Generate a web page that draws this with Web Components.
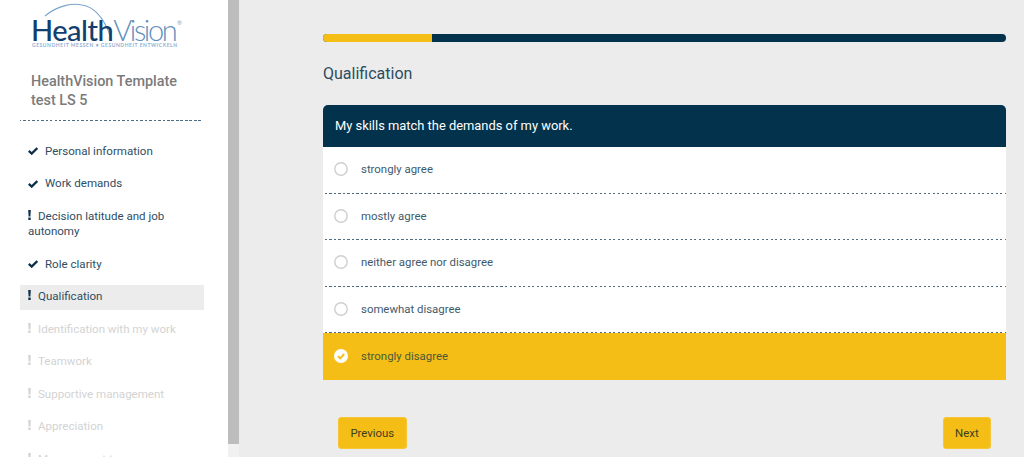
<!DOCTYPE html>
<html lang="en">
<head>
<meta charset="utf-8">
<title>HealthVision</title>
<style>
  html, body { margin: 0; height: 100%; overflow: hidden; }
  body { font-family: Roboto, "Liberation Sans", sans-serif; background: #ececec; }
</style>
</head>
<body>
<hv-app>
  <hv-sidebar slot="side" heading="HealthVision Template test LS 5">
    <hv-nav-item state="done">Personal information</hv-nav-item>
    <hv-nav-item state="done">Work demands</hv-nav-item>
    <hv-nav-item state="todo">Decision latitude and job autonomy</hv-nav-item>
    <hv-nav-item state="done">Role clarity</hv-nav-item>
    <hv-nav-item state="todo" active>Qualification</hv-nav-item>
    <hv-nav-item state="todo" disabled>Identification with my work</hv-nav-item>
    <hv-nav-item state="todo" disabled>Teamwork</hv-nav-item>
    <hv-nav-item state="todo" disabled>Supportive management</hv-nav-item>
    <hv-nav-item state="todo" disabled>Appreciation</hv-nav-item>
    <hv-nav-item state="todo" disabled>Management transparency</hv-nav-item>
  </hv-sidebar>
  <hv-progress value="16"></hv-progress>
  <hv-heading>Qualification</hv-heading>
  <hv-question text="My skills match the demands of my work.">
    <hv-option>strongly agree</hv-option>
    <hv-option>mostly agree</hv-option>
    <hv-option>neither agree nor disagree</hv-option>
    <hv-option>somewhat disagree</hv-option>
    <hv-option selected>strongly disagree</hv-option>
  </hv-question>
  <hv-actions>
    <hv-button>Previous</hv-button>
    <hv-button>Next</hv-button>
  </hv-actions>
</hv-app>
<script>
'use strict';

// small helper so every element sets up its shadow root the same way
function shadow(el, html) {
  const template = document.createElement('template');
  template.innerHTML = html;
  const root = el.attachShadow({ mode: 'open' });
  root.appendChild(template.content.cloneNode(true));
  return root;
}

customElements.define('hv-app', class extends HTMLElement {
  constructor() {
    super();
    shadow(this, `
      <style>
        :host { display: flex; height: 457px; overflow: hidden; }
        .side { flex: 0 0 228px; height: 457px; background: #fff; overflow: hidden; }
        .bar { flex: 0 0 11px; background: #f1f1f1; display: flex; }
        .bar div { flex: 1; height: 444px; background: #bdbdbd; }
        main { flex: 1; padding: 34px 18px 0 84px; min-width: 0; }
      </style>
      <div class="side"><slot name="side"></slot></div>
      <div class="bar"><div></div></div>
      <main><slot></slot></main>
    `);
  }
});

customElements.define('hv-logo', class extends HTMLElement {
  constructor() {
    super();
    shadow(this, `
      <style>
        :host { display: block; height: 50px; position: relative; }
        svg { position: absolute; left: 0; top: 0; }
        .word { position: absolute; left: 31px; top: 18px; font: 300 29px/24px Lato, sans-serif; letter-spacing: -2.4px; white-space: nowrap; color: #5f8fc0; }
        .word b { font-weight: 500; letter-spacing: -.5px; color: #123f6d; }
        .reg { position: absolute; left: 177px; top: 19px; font: 400 6px/7px Lato, sans-serif; color: #7fa3c9; }
        .tag { position: absolute; left: 32px; top: 42px; font: 700 5px/6px Lato, sans-serif; letter-spacing: .54px; white-space: nowrap; color: #8fb0d2; }
      </style>
      <svg width="228" height="50" viewBox="0 0 228 50"><path d="M45 16 C58 5 73 3 82 5 C95 7 104 19 110 35" fill="none" stroke="#7ba3cc" stroke-width="1.1"/></svg>
      <div class="word"><b>Health</b>Vision</div>
      <div class="reg">®</div>
      <div class="tag">GESUNDHEIT MESSEN • GESUNDHEIT ENTWICKELN</div>
    `);
  }
});

customElements.define('hv-sidebar', class extends HTMLElement {
  constructor() {
    super();
    const root = shadow(this, `
      <style>
        :host { display: block; padding-bottom: 20px; }
        h1 { margin: 22px 0 0; padding: 0 40px 0 31px; font: 500 14.4px/19px Roboto, sans-serif; color: #7b7b7b; height: 39px; }
        .rule { margin: 9px 26px 0 20px; height: 1px; background: repeating-linear-gradient(90deg, #4d6c82 0 1px, transparent 1px 3px, #4d6c82 3px 4.5px); }
        nav { margin: 18.5px 24px 0 20px; display: block; }
      </style>
      <hv-logo></hv-logo>
      <h1></h1>
      <div class="rule"></div>
      <nav><slot></slot></nav>
    `);
    root.querySelector('h1').textContent = this.getAttribute('heading');
  }
});

customElements.define('hv-nav-item', class extends HTMLElement {
  constructor() {
    super();
    const done = this.getAttribute('state') === 'done';
    const icon = done
      ? '<svg class="chk" width="10" height="8" viewBox="0 0 10 8"><path d="M.8 3.9 3.7 6.6 9.3 1.1" fill="none" stroke="currentColor" stroke-width="2.3"/></svg>'
      : '<svg class="exc" width="3" height="10" viewBox="0 0 3 10"><path d="M.2 0H2.8L2.4 6.4H.6ZM.3 7.6H2.7V10H.3Z" fill="currentColor"/></svg>';
    shadow(this, `
      <style>
        :host { display: block; padding: 4px 7px 5px 8px; margin-bottom: 7.6px; font: 400 11.55px/15.9px Roboto, sans-serif; color: #2f4d62; }
        :host([active]) { background: #ececec; }
        :host([disabled]) { color: #d3d3d3; }
        svg { display: inline-block; margin-right: 7px; }
        .chk { vertical-align: -0.5px; color: #0d2f47; }
        .exc { vertical-align: 0; color: #0d2f47; }
        :host([disabled]) .exc { color: #d3d3d3; }
      </style>
      ${icon}<slot></slot>
    `);
  }
});

customElements.define('hv-progress', class extends HTMLElement {
  constructor() {
    super();
    const root = shadow(this, `
      <style>
        :host { display: block; height: 8px; border-radius: 4px; background: #03324c; overflow: hidden; }
        div { height: 100%; background: #f5be17; }
      </style>
      <div></div>
    `);
    root.querySelector('div').style.width = this.getAttribute('value') + '%';
  }
});

customElements.define('hv-heading', class extends HTMLElement {
  constructor() {
    super();
    shadow(this, `
      <style>
        :host { display: block; margin: 22px 0 21px; font: 400 16px/20px Roboto, sans-serif; color: #2c4c61; }
      </style>
      <slot></slot>
    `);
  }
});

customElements.define('hv-question', class extends HTMLElement {
  constructor() {
    super();
    const root = shadow(this, `
      <style>
        :host { display: block; }
        header { height: 42px; box-sizing: border-box; padding: 0 12px; display: flex; align-items: center; background: #03324c; color: #fff; font: 400 12.9px/16px Roboto, sans-serif; border-radius: 5px 5px 0 0; }
      </style>
      <header></header>
      <slot></slot>
    `);
    root.querySelector('header').textContent = this.getAttribute('text');
  }
});

customElements.define('hv-option', class extends HTMLElement {
  constructor() {
    super();
    const mark = this.hasAttribute('selected')
      ? '<svg width="14" height="14" viewBox="0 0 14 14"><circle cx="7" cy="7" r="7" fill="#fff"/><path d="M3.9 7.1 6.2 9.3 10.2 5" fill="none" stroke="#f5be17" stroke-width="1.9"/></svg>'
      : '<svg width="14" height="14" viewBox="0 0 14 14"><circle cx="7" cy="7" r="6.2" fill="#fff" stroke="#cfcfcf" stroke-width="1.4"/></svg>';
    shadow(this, `
      <style>
        :host { display: flex; align-items: center; gap: 13px; height: 46.5px; box-sizing: border-box; padding: 0 12px 1.6px 11px; position: relative; background: #fff; font: 400 11.4px/16px Roboto, sans-serif; color: #3f5a6c; }
        :host(:not([selected]))::after { content: ""; position: absolute; left: 0; right: 0; bottom: 0; height: 1px; background: repeating-linear-gradient(90deg, transparent 0 2px, #4d6c82 2px 4.5px); }
        :host([selected]) { background: #f5be17; color: #4a5a38; padding-bottom: .6px; }
        svg { flex: none; }
      </style>
      ${mark}<slot></slot>
    `);
  }
});

customElements.define('hv-actions', class extends HTMLElement {
  constructor() {
    super();
    shadow(this, `
      <style>
        :host { display: flex; justify-content: space-between; padding: 37px 15px 0; }
      </style>
      <slot></slot>
    `);
  }
});

customElements.define('hv-button', class extends HTMLElement {
  constructor() {
    super();
    shadow(this, `
      <style>
        :host { display: block; height: 32px; box-sizing: border-box; padding: 0 11.4px; background: #f5be17; border: 1px solid #f6c637; border-radius: 3px; font: 400 11.4px/30px Roboto, sans-serif; color: #3b3f20; }
      </style>
      <slot></slot>
    `);
  }
});
</script>
</body>
</html>
